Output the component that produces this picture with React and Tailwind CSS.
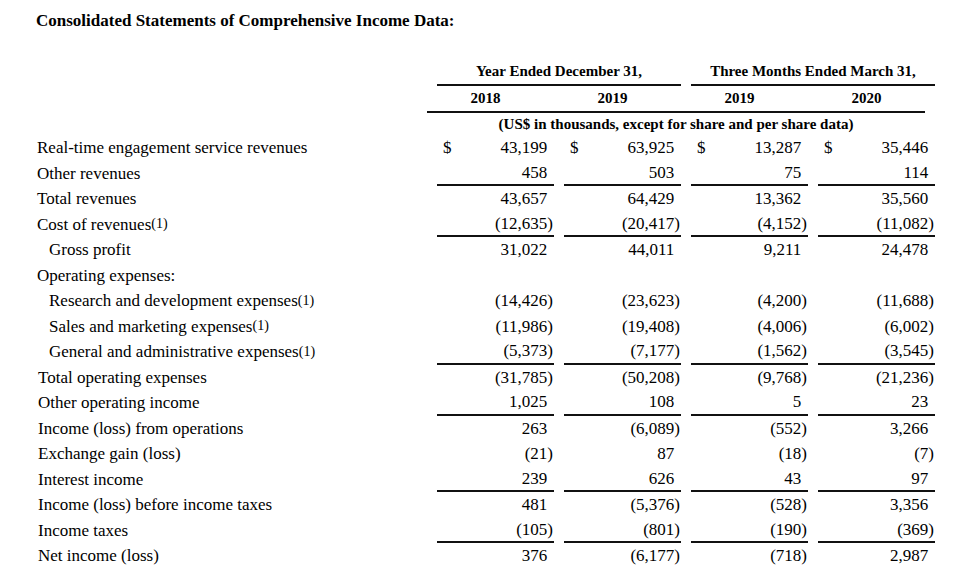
const rows = [
  { label: "Real-time engagement service revenues", values: ["43,199", "63,925", "13,287", "35,446"], dollar: true },
  { label: "Other revenues", values: ["458", "503", "75", "114"], line: true },
  { label: "Total revenues", values: ["43,657", "64,429", "13,362", "35,560"] },
  { label: "Cost of revenues", note: true, values: ["(12,635)", "(20,417)", "(4,152)", "(11,082)"], line: true },
  { label: "Gross profit", indent: true, values: ["31,022", "44,011", "9,211", "24,478"] },
  { label: "Operating expenses:", values: [] },
  { label: "Research and development expenses", note: true, indent: true, values: ["(14,426)", "(23,623)", "(4,200)", "(11,688)"] },
  { label: "Sales and marketing expenses", note: true, indent: true, values: ["(11,986)", "(19,408)", "(4,006)", "(6,002)"] },
  { label: "General and administrative expenses", note: true, indent: true, values: ["(5,373)", "(7,177)", "(1,562)", "(3,545)"], line: true },
  { label: "Total operating expenses", lower: true, values: ["(31,785)", "(50,208)", "(9,768)", "(21,236)"] },
  { label: "Other operating income", lower: true, values: ["1,025", "108", "5", "23"], line: true },
  { label: "Income (loss) from operations", lower: true, values: ["263", "(6,089)", "(552)", "3,266"] },
  { label: "Exchange gain (loss)", lower: true, values: ["(21)", "87", "(18)", "(7)"] },
  { label: "Interest income", lower: true, values: ["239", "626", "43", "97"], line: true },
  { label: "Income (loss) before income taxes", lower: true, values: ["481", "(5,376)", "(528)", "3,356"] },
  { label: "Income taxes", lower: true, values: ["(105)", "(801)", "(190)", "(369)"], line: true },
  { label: "Net income (loss)", lower: true, values: ["376", "(6,177)", "(718)", "2,987"] },
];

const cols = "grid grid-cols-[427px_117px_117px_117px_117px] gap-x-[10px]";

const Amount = ({ value, dollar, line }) => {
  const neg = value.startsWith("(");
  const num = neg ? value.slice(0, -1) : value;
  return (
    <div className={`flex items-center justify-between pl-[6px] pr-[1px] ${line ? "border-b-2 border-[#111]" : ""}`}>
      <span>{dollar ? "$" : ""}</span>
      <span>
        {num}
        <span className={neg ? "" : "invisible"}>)</span>
      </span>
    </div>
  );
};

const Row = ({ row }) => {
  const pad = row.indent ? "pl-[49px]" : row.lower ? "pl-[38px]" : "pl-[37px]";
  return (
    <div className={`${cols} h-[25.5px]`}>
      <div className={`flex items-center ${pad}`}>
        {row.label}
        {row.note && <span className="text-[14px]">(1)</span>}
      </div>
      {row.values.map((v, i) => (
        <Amount key={i} value={v} dollar={row.dollar} line={row.line} />
      ))}
    </div>
  );
};

export default function App() {
  return (
    <div
      className="w-[967px] h-[573px] overflow-hidden bg-white text-black text-[17px] leading-none"
      style={{ fontFamily: '"Liberation Serif", "Times New Roman", serif' }}
    >
      <div className="h-[40px] flex items-center pl-[36px] font-bold">
        Consolidated Statements of Comprehensive Income Data:
      </div>
      <div className="h-[19px]" />
      <div className={`${cols} h-[27px] text-[15px] font-bold`}>
        <div />
        <div className="col-span-2 flex items-center justify-center border-b-2 border-[#111]">Year Ended December 31,</div>
        <div className="col-span-2 flex items-center justify-center border-b-2 border-[#111]">Three Months Ended March 31,</div>
      </div>
      <div className="flex h-[27px] text-[15px] font-bold">
        <div className="w-[427px]" />
        <div className="w-[498px] grid grid-cols-[117px_117px_117px_117px] gap-x-[10px] border-b-2 border-[#111]">
          <div className="flex items-center justify-center">2018</div>
          <div className="flex items-center justify-center">2019</div>
          <div className="flex items-center justify-center">2019</div>
          <div className="flex items-center justify-center">2020</div>
        </div>
      </div>
      <div className="flex h-[22px] text-[15px] font-bold">
        <div className="w-[427px]" />
        <div className="w-[498px] flex items-center justify-center">(US$ in thousands, except for share and per share data)</div>
      </div>
      {rows.map((r, i) => (
        <Row key={i} row={r} />
      ))}
    </div>
  );
}
